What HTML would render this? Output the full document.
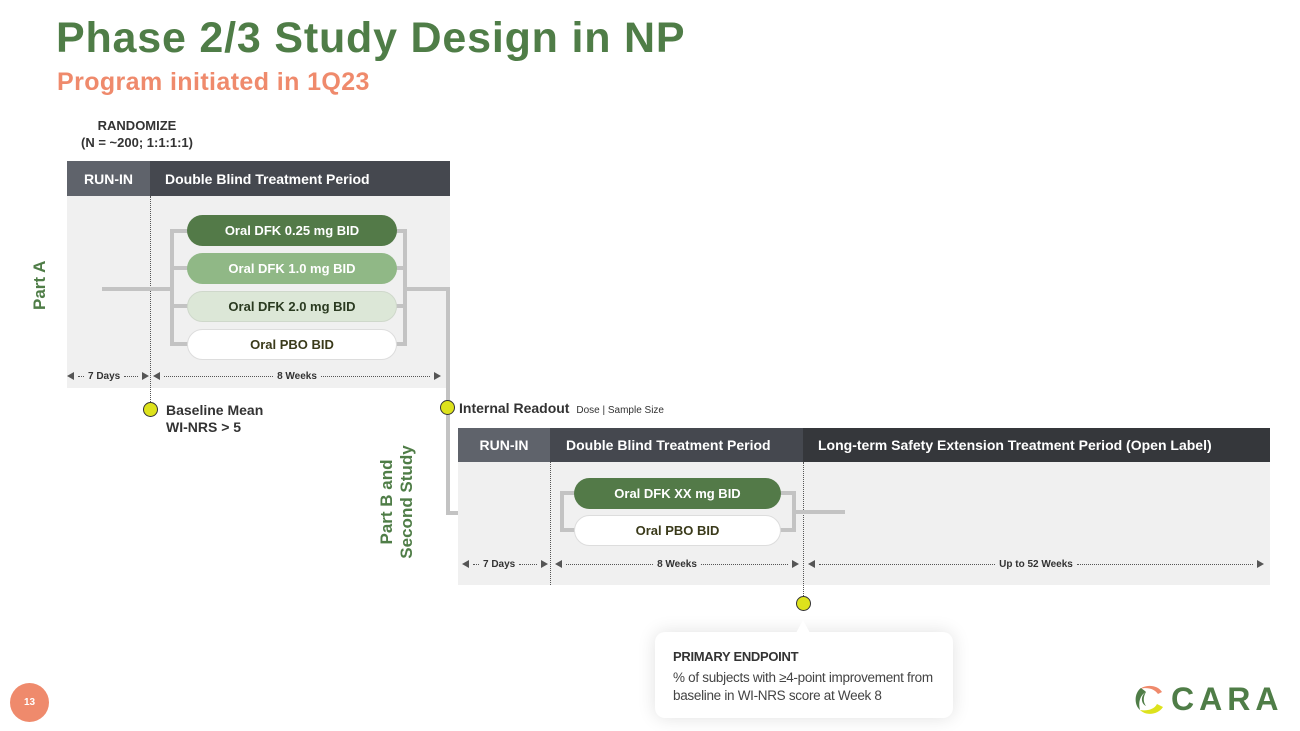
<!DOCTYPE html>
<html><head><meta charset="utf-8"><style>
*{margin:0;padding:0;box-sizing:border-box}
body{width:1300px;height:731px;background:#fff;position:relative;overflow:hidden;font-family:"Liberation Sans",Arial,sans-serif}
.a{position:absolute}
.hd{position:absolute;color:#fff;font-weight:bold;font-size:14px;display:flex;align-items:center}
.pill{position:absolute;border-radius:16px;font-weight:bold;font-size:13px;display:flex;align-items:center;justify-content:center}
.ln{position:absolute;background:#c3c3c3}
.dot{position:absolute;width:15px;height:15px;border-radius:50%;background:#dde21c;border:1.5px solid #333}
.days{position:absolute;font-size:10px;font-weight:bold;color:#333;display:flex;align-items:center}
.dl{flex:1;border-top:1.5px dotted #555;margin:0 4px}
.vd{position:absolute;border-left:1.2px dotted #555;width:0}
.tri-l{width:0;height:0;border-top:4px solid transparent;border-bottom:4px solid transparent;border-right:7px solid #555}
.tri-r{width:0;height:0;border-top:4px solid transparent;border-bottom:4px solid transparent;border-left:7px solid #555}
</style></head><body>
<div class="a" style="left:56px;top:14px;font-size:43px;font-weight:bold;color:#4f7d47;letter-spacing:0.8px">Phase 2/3 Study Design in NP</div>
<div class="a" style="left:57px;top:68px;font-size:25px;font-weight:bold;color:#ef8a6c;letter-spacing:0.4px">Program initiated in 1Q23</div>
<div class="a" style="left:72px;top:117px;width:130px;text-align:center;font-size:13px;font-weight:bold;color:#333;line-height:17px">RANDOMIZE<br>(N = ~200; 1:1:1:1)</div>

<!-- Top table -->
<div class="a" style="left:67px;top:196px;width:383px;height:192px;background:#f0f0f0"></div>
<div class="hd" style="left:67px;top:161px;width:83px;height:35px;background:#5f636b;justify-content:center">RUN-IN</div>
<div class="hd" style="left:150px;top:161px;width:300px;height:35px;background:#45484f;padding-left:15px">Double Blind Treatment Period</div>
<div class="vd" style="left:150px;top:196px;height:206px"></div>
<div class="ln" style="left:102px;top:287px;width:72px;height:4px"></div>
<div class="ln" style="left:170px;top:229px;width:4px;height:117px"></div>
<div class="ln" style="left:170px;top:229px;width:18px;height:4px"></div>
<div class="ln" style="left:170px;top:266px;width:18px;height:4px"></div>
<div class="ln" style="left:170px;top:304px;width:18px;height:4px"></div>
<div class="ln" style="left:170px;top:342px;width:18px;height:4px"></div>
<div class="ln" style="left:403px;top:229px;width:4px;height:117px"></div>
<div class="ln" style="left:396px;top:229px;width:10px;height:4px"></div>
<div class="ln" style="left:396px;top:266px;width:10px;height:4px"></div>
<div class="ln" style="left:396px;top:304px;width:10px;height:4px"></div>
<div class="ln" style="left:396px;top:342px;width:10px;height:4px"></div>
<div class="ln" style="left:403px;top:287px;width:47px;height:4px"></div>
<div class="ln" style="left:446px;top:287px;width:4px;height:228px"></div>
<div class="ln" style="left:446px;top:511px;width:116px;height:4px"></div>
<div class="pill" style="left:187px;top:215px;width:210px;height:31px;background:#537a48;color:#fff">Oral DFK 0.25 mg BID</div>
<div class="pill" style="left:187px;top:253px;width:210px;height:31px;background:#90b886;color:#fff">Oral DFK 1.0 mg BID</div>
<div class="pill" style="left:187px;top:291px;width:210px;height:31px;background:#dce7d7;color:#2a3a20;border:1px solid #cfd8cb">Oral DFK 2.0 mg BID</div>
<div class="pill" style="left:187px;top:329px;width:210px;height:31px;background:#fff;color:#3a3a1a;border:1px solid #ddd">Oral PBO BID</div>
<div class="days" style="left:67px;top:370px;width:82px;height:12px"><div class="tri-l"></div><div class="dl" style="flex:0 0 6px"></div>7 Days<div class="dl"></div><div class="tri-r"></div></div>
<div class="days" style="left:153px;top:370px;width:288px;height:12px"><div class="tri-l"></div><div class="dl"></div>8 Weeks<div class="dl"></div><div class="tri-r"></div></div>
<div class="dot" style="left:143px;top:402px"></div>
<div class="a" style="left:166px;top:402px;font-size:14px;font-weight:bold;color:#333;line-height:17px">Baseline Mean<br>WI-NRS &gt; 5</div>
<div class="dot" style="left:440px;top:400px"></div>
<div class="a" style="left:459px;top:400px;font-size:14px;font-weight:bold;color:#333">Internal Readout <span style="font-size:10px;font-weight:normal;margin-left:3px">Dose | Sample Size</span></div>
<div class="a" style="left:20px;top:280px;width:40px;font-size:17px;font-weight:bold;color:#4f7d47;transform:rotate(-90deg);white-space:nowrap;text-align:center">Part A</div>
<div class="a" style="left:337px;top:482px;width:120px;font-size:17px;font-weight:bold;color:#4f7d47;transform:rotate(-90deg);white-space:nowrap;text-align:center;line-height:20px">Part B and<br>Second Study</div>

<!-- Bottom table -->
<div class="a" style="left:458px;top:462px;width:812px;height:123px;background:#f0f0f0"></div>
<div class="hd" style="left:458px;top:428px;width:92px;height:34px;background:#5f636b;justify-content:center">RUN-IN</div>
<div class="hd" style="left:550px;top:428px;width:253px;height:34px;background:#45484f;padding-left:16px">Double Blind Treatment Period</div>
<div class="hd" style="left:803px;top:428px;width:467px;height:34px;background:#35373b;padding-left:15px">Long-term Safety Extension Treatment Period (Open Label)</div>
<div class="vd" style="left:550px;top:462px;height:123px"></div>
<div class="vd" style="left:803px;top:462px;height:134px"></div>
<div class="ln" style="left:560px;top:491px;width:4px;height:41px"></div>
<div class="ln" style="left:560px;top:491px;width:16px;height:4px"></div>
<div class="ln" style="left:560px;top:528px;width:16px;height:4px"></div>
<div class="ln" style="left:792px;top:491px;width:4px;height:41px"></div>
<div class="ln" style="left:779px;top:491px;width:16px;height:4px"></div>
<div class="ln" style="left:779px;top:528px;width:16px;height:4px"></div>
<div class="ln" style="left:792px;top:510px;width:53px;height:4px"></div>
<div class="pill" style="left:574px;top:478px;width:207px;height:31px;background:#537a48;color:#fff">Oral DFK XX mg BID</div>
<div class="pill" style="left:574px;top:515px;width:207px;height:31px;background:#fff;color:#3a3a1a;border:1px solid #ddd">Oral PBO BID</div>
<div class="days" style="left:462px;top:558px;width:86px;height:12px"><div class="tri-l"></div><div class="dl" style="flex:0 0 6px"></div>7 Days<div class="dl"></div><div class="tri-r"></div></div>
<div class="days" style="left:555px;top:558px;width:244px;height:12px"><div class="tri-l"></div><div class="dl"></div>8 Weeks<div class="dl"></div><div class="tri-r"></div></div>
<div class="days" style="left:808px;top:558px;width:456px;height:12px"><div class="tri-l"></div><div class="dl"></div>Up to 52 Weeks<div class="dl"></div><div class="tri-r"></div></div>
<div class="dot" style="left:796px;top:596px"></div>

<!-- Callout -->
<div class="a" style="left:655px;top:632px;width:298px;height:86px;background:#fff;border-radius:10px;box-shadow:0 0 18px rgba(0,0,0,0.12)"></div>
<div class="a" style="left:796px;top:620px;width:0;height:0;border-left:7px solid transparent;border-right:7px solid transparent;border-bottom:13px solid #fff"></div>
<div class="a" style="left:673px;top:649px;font-size:13px;font-weight:bold;color:#333;letter-spacing:-0.3px">PRIMARY ENDPOINT</div>
<div class="a" style="left:673px;top:669px;font-size:13.5px;color:#444;line-height:18px;letter-spacing:-0.3px">% of subjects with ≥4-point improvement from<br>baseline in WI-NRS score at Week 8</div>

<!-- page number -->
<div class="a" style="left:10px;top:683px;width:39px;height:39px;border-radius:50%;background:#ef8a6c;color:#fff;font-size:10px;font-weight:bold;display:flex;align-items:center;justify-content:center">13</div>

<!-- logo -->
<svg class="a" style="left:1132px;top:683px" width="36" height="34" viewBox="0 0 36 34">
<path d="M30 9 C26 2 14 1 8 6 C14 4 22 5 26 11 Z" fill="#ef8a6c"/>
<path d="M9 5 C2 10 2 22 8 27 C6 20 8 12 14 9 C12 7 10 6 9 5Z" fill="#4f7d47"/>
<path d="M14 9 C9 12 8 20 14 23 C11 19 11 14 14 9Z" fill="#4f7d47"/>
<path d="M8 27 C14 33 26 32 31 24 L25 21 C22 27 14 28 8 27Z" fill="#dde21c"/>
</svg>
<div class="a" style="left:1171px;top:681px;font-size:32px;font-weight:bold;color:#4f7d47;letter-spacing:5px">CARA</div>
</body></html>
